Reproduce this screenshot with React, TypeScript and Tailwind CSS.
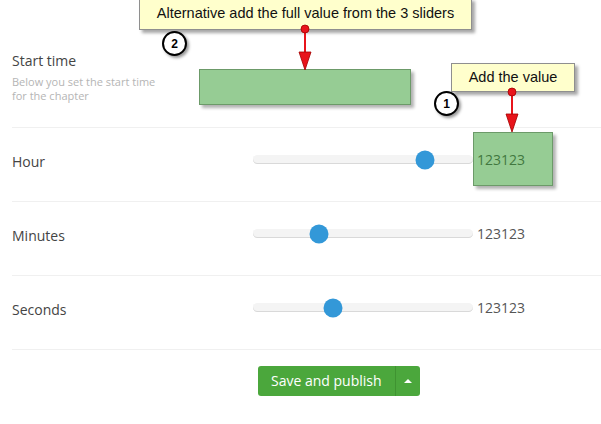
import React from "react";

const rows = [
  { label: "Hour", pos: 172 },
  { label: "Minutes", pos: 66 },
  { label: "Seconds", pos: 80 },
];

function Slider({ pos }: { pos: number }) {
  return (
    <div className="relative h-[9px] w-[220px] rounded-full bg-[#f4f4f4] shadow-[inset_0_-1px_0_#d9d9d9]">
      <div
        className="absolute top-1/2 h-[19px] w-[19px] -translate-x-1/2 -translate-y-1/2 rounded-full bg-[#3398d8]"
        style={{ left: pos }}
      />
    </div>
  );
}

function Callout({ className, children }: { className: string; children: React.ReactNode }) {
  return (
    <div
      className={`absolute flex items-center justify-center border border-[#8f8f8f] bg-[#ffffcc] text-[14.5px] text-[#111] shadow-[3px_3px_3px_rgba(0,0,0,0.35)] ${className}`}
      style={{ fontFamily: '"Liberation Sans", Arial, sans-serif' }}
    >
      {children}
    </div>
  );
}

function Step({ n, className }: { n: number; className: string }) {
  return (
    <div
      className={`absolute flex h-[25px] w-[25px] items-center justify-center rounded-full border-2 border-black bg-white text-[12px] font-bold text-black shadow-[2px_2px_3px_rgba(0,0,0,0.4)] ${className}`}
      style={{ fontFamily: '"Liberation Sans", Arial, sans-serif' }}
    >
      {n}
    </div>
  );
}

export default function App() {
  return (
    <div
      className="relative h-[424px] w-[601px] overflow-hidden bg-white text-[#444]"
      style={{ fontFamily: '"Open Sans", sans-serif' }}
    >
      <div className="pl-3">
        {/* start time */}
        <div className="h-[128px] border-b border-[#f0f0f0] pt-[51px]">
          <div className="text-[14px] leading-5 text-[#444]">Start time</div>
          <div className="mt-[4px] text-[11px] leading-[14px] text-[#b5b5b5]">
            Below you set the start time
            <br />
            for the chapter
          </div>
        </div>

        {rows.map((r) => (
          <div key={r.label} className="flex h-[74px] items-center border-b border-[#f0f0f0] pb-[10px]">
            <div className="w-[241px] pt-[3px] text-[14px] text-[#444]">{r.label}</div>
            <Slider pos={r.pos} />
            <div className="ml-1 text-[14px] text-[#555]">123123</div>
          </div>
        ))}

        <div className="flex pl-[246px] pt-[16px]">
          <div className="flex h-[30px] overflow-hidden rounded-[3px] bg-[#4ba73c] text-white">
            <div className="flex items-center px-[13px] pb-[2px] text-[14px]">Save and publish</div>
            <div className="flex w-[25px] items-center justify-center border-l border-[#3f9331]">
              <div className="h-0 w-0 border-x-[4px] border-b-[4px] border-x-transparent border-b-white" />
            </div>
          </div>
        </div>
      </div>

      {/* annotation overlays */}
      <div className="absolute left-[199px] top-[69px] h-[36px] w-[212px] border border-[#6c9a69] bg-[#2e9a2a]/50 shadow-[3px_3px_3px_rgba(0,0,0,0.3)]" />
      <div className="absolute left-[473px] top-[132px] h-[54px] w-[80px] border border-[#6c9a69] bg-[#2e9a2a]/50 shadow-[3px_3px_3px_rgba(0,0,0,0.3)]" />

      <Callout className="left-[139px] top-[-2px] h-[32px] w-[333px]">
        Alternative add the full value from the 3 sliders
      </Callout>
      <Callout className="left-[451px] top-[63px] h-[29px] w-[124px]">Add the value</Callout>

      <Step n={2} className="left-[162px] top-[31px]" />
      <Step n={1} className="left-[434px] top-[91px]" />

      <svg className="pointer-events-none absolute left-0 top-0" width="601" height="424">
        <g fill="#e8141b" stroke="#a30000" strokeWidth="0.8">
          <line x1="305" y1="29" x2="305" y2="54" stroke="#e8141b" strokeWidth="2" />
          <circle cx="305" cy="29" r="4" />
          <polygon points="299,52 311,52 305,70" />
          <line x1="512" y1="92" x2="512" y2="115" stroke="#e8141b" strokeWidth="2" />
          <circle cx="512" cy="92" r="4" />
          <polygon points="506,114 518,114 512,132" />
        </g>
      </svg>
    </div>
  );
}
